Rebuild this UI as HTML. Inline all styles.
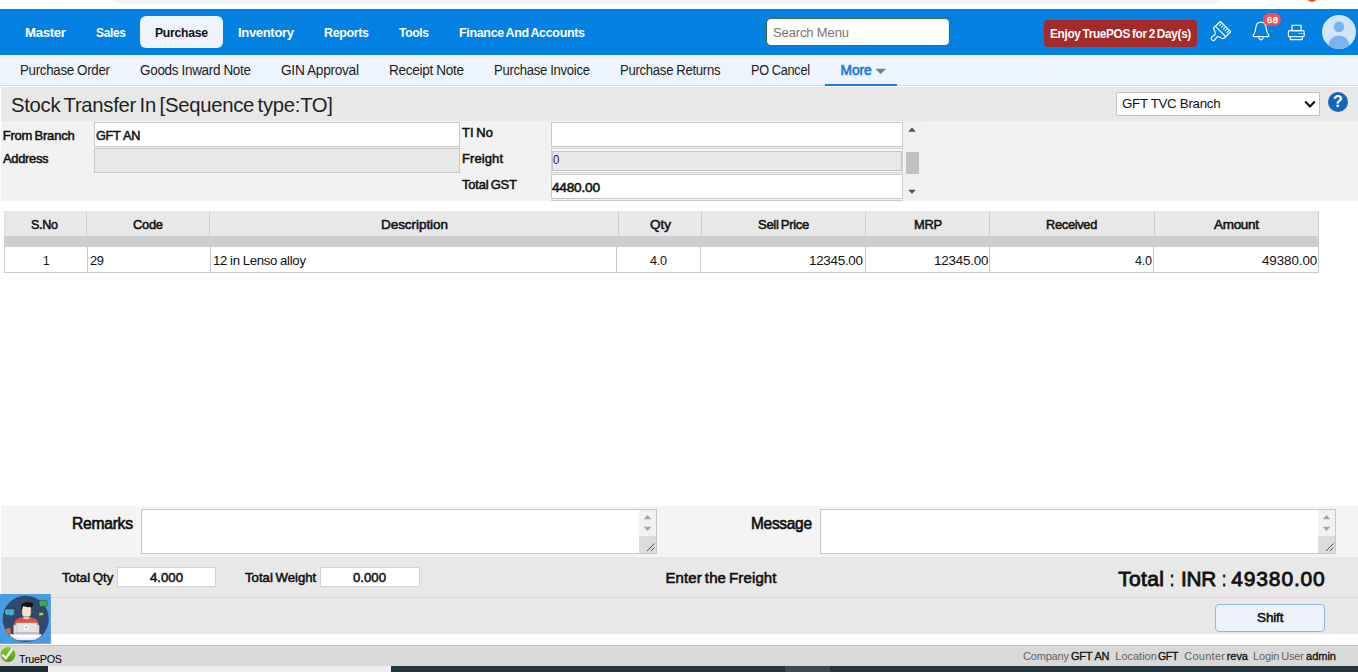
<!DOCTYPE html>
<html>
<head>
<meta charset="utf-8">
<title>Stock Transfer In</title>
<style>
html,body{margin:0;padding:0;}
body{width:1358px;height:672px;position:relative;overflow:hidden;background:#fff;font-family:"Liberation Sans",sans-serif;}
.a{position:absolute;box-sizing:border-box;}
.t{position:absolute;white-space:nowrap;font-family:"Liberation Sans",sans-serif;}
.inp{position:absolute;box-sizing:border-box;background:#fff;border:1px solid #c8c8c8;}
.dis{background:#e8e8e8;}
</style>
</head>
<body>
<!-- browser chrome sliver -->
<div class="a" style="left:108px;top:-10px;width:1118px;height:14px;background:#f1f3f4;border-radius:0 0 14px 14px;"></div>
<div class="a" style="left:1307px;top:-8px;width:10px;height:10px;border-radius:5px;background:#e8501a;"></div>

<!-- top blue bar -->
<div class="a" style="left:0;top:9px;width:1358px;height:46px;background:#0381e3;"></div>
<div class="a" style="left:140px;top:16px;width:83px;height:32px;background:#edf4fc;border-radius:6px;"></div>
<!-- search -->
<div class="a" style="left:766px;top:18px;width:184px;height:28px;background:#fff;border:1px solid #3c6e46;border-radius:5px;"></div>
<!-- trial button -->
<div class="a" style="left:1044px;top:20px;width:153px;height:27px;background:#a52a2a;border-radius:4px;"></div>

<!-- sub nav -->
<div class="a" style="left:0;top:55px;width:1358px;height:31px;background:#edf4fc;border-bottom:1px solid #c5dcf1;"></div>
<div class="a" style="left:825px;top:83.5px;width:72px;height:2px;background:#1c7ed6;"></div>

<!-- title bar -->
<div class="a" style="left:1px;top:87px;width:1357px;height:34px;background:#e8e8e8;"></div>
<!-- form area -->
<div class="a" style="left:1px;top:121px;width:1357px;height:80px;background:#f2f2f2;"></div>

<!-- branch select -->
<div class="a" style="left:1116px;top:92px;width:204px;height:23.5px;background:#fff;border:1px solid #c4c4c4;"></div>

<!-- form inputs -->
<div class="inp" style="left:94px;top:122px;width:365.5px;height:24.5px;"></div>
<div class="inp dis" style="left:94px;top:148px;width:365.5px;height:24.5px;"></div>
<div class="inp" style="left:551px;top:122px;width:352px;height:24.5px;"></div>
<div class="inp" style="left:551px;top:148px;width:352px;height:24.5px;background:#fafafa;border:1px solid #d2d2d2;"></div><div class="inp" style="left:552px;top:151px;width:350px;height:20px;background:#e8e8e8;border:1px solid #c4c4c4;"></div>
<div class="inp" style="left:551px;top:174px;width:352px;height:24.5px;"></div>
<div class="a" style="left:551px;top:200px;width:352px;height:1px;background:#c8c8c8;"></div>
<!-- form scrollbar -->
<div class="a" style="left:904px;top:121px;width:17px;height:80px;background:#f0f0f0;"></div>
<div class="a" style="left:906px;top:152px;width:13px;height:22px;background:#c1c1c1;"></div>

<!-- table -->
<div class="a" style="left:4px;top:211px;width:1315px;height:25px;background:#e8e8e8;"></div>
<div class="a" style="left:4px;top:236px;width:1315px;height:10.5px;background:#cecece;"></div>
<div class="a" style="left:4px;top:246.5px;width:1315px;height:26px;background:#fff;border:1px solid #c8c8c8;border-top:none;"></div>

<!-- remarks area -->
<div class="a" style="left:1px;top:506px;width:1357px;height:51px;background:#f4f4f4;"></div>
<div class="a" style="left:1px;top:557px;width:1357px;height:77px;background:#e8e8e8;"></div>
<div class="a" style="left:1px;top:597px;width:1357px;height:1px;background:#d6d6d6;"></div>
<div class="inp" style="left:141px;top:509px;width:516px;height:45px;"></div>
<div class="inp" style="left:820px;top:509px;width:516px;height:45px;"></div>
<div class="inp" style="left:117px;top:567px;width:99px;height:20px;border-color:#d4d4d4;"></div>
<div class="inp" style="left:320px;top:567px;width:100px;height:20px;border-color:#d4d4d4;"></div>
<!-- shift button -->
<div class="a" style="left:1215px;top:604px;width:110px;height:28px;background:#edf2fb;border:1px solid #8db6f0;border-radius:4px;"></div>

<!-- footer -->
<div class="a" style="left:0;top:645px;width:1358px;height:21px;background:#d9d9d9;border-top:1px solid #c6c6c6;"></div>
<div class="a" style="left:0;top:666px;width:1358px;height:6px;background:#eeeeee;"></div>
<div class="a" style="left:0;top:666px;width:48px;height:6px;background:#1e2f38;"></div>
<div class="a" style="left:391px;top:666px;width:967px;height:6px;background:#22333b;"></div>
<div class="a" style="left:785px;top:666px;width:45px;height:6px;background:#3a4a52;"></div>


<!-- table dividers -->
<div class="a" style="left:86px;top:211px;width:1px;height:25px;background:#cfcfcf;"></div>
<div class="a" style="left:209px;top:211px;width:1px;height:25px;background:#cfcfcf;"></div>
<div class="a" style="left:618px;top:211px;width:1px;height:25px;background:#cfcfcf;"></div>
<div class="a" style="left:701px;top:211px;width:1px;height:25px;background:#cfcfcf;"></div>
<div class="a" style="left:865px;top:211px;width:1px;height:25px;background:#cfcfcf;"></div>
<div class="a" style="left:989px;top:211px;width:1px;height:25px;background:#cfcfcf;"></div>
<div class="a" style="left:1154px;top:211px;width:1px;height:25px;background:#cfcfcf;"></div>
<div class="a" style="left:1318px;top:211px;width:1px;height:25px;background:#cfcfcf;"></div>
<div class="a" style="left:4px;top:211px;width:1px;height:25px;background:#dcdcdc;"></div>
<div class="a" style="left:87px;top:246.5px;width:1px;height:26px;background:#c8c8c8;"></div>
<div class="a" style="left:210px;top:246.5px;width:1px;height:26px;background:#c8c8c8;"></div>
<div class="a" style="left:616px;top:246.5px;width:1px;height:26px;background:#c8c8c8;"></div>
<div class="a" style="left:700px;top:246.5px;width:1px;height:26px;background:#c8c8c8;"></div>
<div class="a" style="left:865px;top:246.5px;width:1px;height:26px;background:#c8c8c8;"></div>
<div class="a" style="left:989px;top:246.5px;width:1px;height:26px;background:#c8c8c8;"></div>
<div class="a" style="left:1153px;top:246.5px;width:1px;height:26px;background:#c8c8c8;"></div>

<!-- form scrollbar arrows -->
<svg class="a" style="left:905.4px;top:123.3px" width="14" height="14" viewBox="0 0 14 14"><path d="M3.3 8.7 L7 4.4 L10.7 8.7 Z" fill="#505050"/></svg>
<svg class="a" style="left:905.4px;top:185px" width="14" height="14" viewBox="0 0 14 14"><path d="M3.3 4.7 L7 9 L10.7 4.7 Z" fill="#505050"/></svg>

<!-- More caret -->
<svg class="a" style="left:875px;top:68px" width="12" height="7" viewBox="0 0 12 7"><path d="M0.3 0.8 L11 0.8 L5.65 6.3 Z" fill="#7a7f85"/></svg>

<!-- select chevron -->
<svg class="a" style="left:1303px;top:98px" width="14" height="12" viewBox="0 0 14 12"><path d="M2.2 3.6 L7 8.4 L11.8 3.6" fill="none" stroke="#111" stroke-width="2.1"/></svg>

<!-- help icon -->
<div class="a" style="left:1328px;top:92px;width:20px;height:20px;border-radius:10px;background:#1565c0;"></div>
<span class="t" style="left:1333.1px;top:92.2px;line-height:20px;font-size:16px;font-weight:700;color:#fff;">?</span>

<!-- textarea scrollbars -->
<div class="a" style="left:639px;top:510px;width:17px;height:43px;background:#f1f1f1;"></div>
<div class="a" style="left:639px;top:536px;width:17px;height:17px;background:#dcdcdc;"></div>
<svg class="a" style="left:639px;top:510px" width="17" height="43" viewBox="0 0 17 43"><path d="M4.8 9.2 L8.5 4.9 L12.2 9.2 Z" fill="#a3a3a3"/><path d="M4.8 16.7 L8.5 21 L12.2 16.7 Z" fill="#a3a3a3"/><path d="M8 41 L15.5 33.5 M12 41 L15.5 37.5" stroke="#555" stroke-width="1" fill="none"/></svg>
<div class="a" style="left:1318px;top:510px;width:17px;height:43px;background:#f1f1f1;"></div>
<div class="a" style="left:1318px;top:536px;width:17px;height:17px;background:#dcdcdc;"></div>
<svg class="a" style="left:1318px;top:510px" width="17" height="43" viewBox="0 0 17 43"><path d="M4.8 9.2 L8.5 4.9 L12.2 9.2 Z" fill="#a3a3a3"/><path d="M4.8 16.7 L8.5 21 L12.2 16.7 Z" fill="#a3a3a3"/><path d="M8 41 L15.5 33.5 M12 41 L15.5 37.5" stroke="#555" stroke-width="1" fill="none"/></svg>

<!-- brush icon -->
<svg class="a" style="left:1204px;top:14px" width="40" height="34" viewBox="0 0 791 672" fill="none" stroke="#fff" stroke-width="24" stroke-linejoin="round" stroke-linecap="round">
<path d="M325 148 L528 350 L402 476 Q368 502 335 472 Q292 432 256 452 L216 510 Q182 542 151 506 Q130 470 166 446 L214 412 Q240 386 214 340 Q176 290 202 262 Z"/>
<path d="M232 250 L422 440"/>
<path d="M335 198 L306 228 M373 232 L344 262 M410 268 L381 298 M446 302 L417 332 M482 338 L453 368" stroke-width="20"/>
</svg>

<!-- bell + badge + printer -->
<svg class="a" style="left:1246px;top:10px" width="66" height="38" viewBox="0 0 1167 672" fill="none" stroke="#fff" stroke-width="21" stroke-linejoin="round" stroke-linecap="round">
<path d="M265 215 Q182 215 172 320 Q166 400 127 448 Q118 470 142 470 L388 470 Q412 470 402 448 Q365 400 357 320 Q348 215 265 215 Z"/>
<path d="M228 492 Q238 528 265 528 Q292 528 302 492"/>
<rect x="300" y="55" width="318" height="225" rx="112" fill="#f0524f" stroke="none"/>
<rect x="812" y="270" width="162" height="95"/>
<rect x="750" y="365" width="278" height="108" rx="22"/>
<rect x="782" y="473" width="212" height="50" fill="#0381e3"/>
<path d="M940 415 L952 415 M975 415 L990 415" stroke-width="16"/>
</svg>

<!-- user avatar -->
<svg class="a" style="left:1321px;top:14px" width="36" height="36" viewBox="0 0 36 36">
<defs><clipPath id="uc"><circle cx="18" cy="18" r="17"/></clipPath></defs>
<circle cx="18" cy="18" r="17" fill="#cfe6fc"/>
<g clip-path="url(#uc)" fill="#7cb5ee"><circle cx="18" cy="12.9" r="5.3"/><ellipse cx="18" cy="31.6" rx="10.5" ry="10.2"/></g>
</svg>

<!-- assistant avatar -->
<svg class="a" style="left:0;top:592px" width="54" height="54" viewBox="0 0 672 672">
<defs><clipPath id="ac"><circle cx="320" cy="335" r="285"/></clipPath></defs>
<rect x="0" y="25" width="633" height="620" fill="#4a9be2"/>
<circle cx="320" cy="335" r="287" fill="#2f4a70"/>
<g clip-path="url(#ac)">
<rect x="75" y="452" width="58" height="80" fill="#e8683c" transform="rotate(-8 100 490)"/>
<path d="M165 420 Q170 325 262 312 L395 312 Q482 325 492 420 L492 540 L165 540 Z" fill="#df5049" stroke="#1d2f45" stroke-width="6"/>
<rect x="292" y="285" width="72" height="50" fill="#f3dfc3"/>
<path d="M290 312 Q328 370 368 312 Z" fill="#f3dfc3"/>
<rect x="272" y="165" width="116" height="145" rx="40" fill="#f7e6cc" stroke="#1d2f45" stroke-width="6"/>
<path d="M262 215 Q250 135 330 125 Q380 118 412 140 Q415 175 390 205 L385 185 Q330 195 288 175 Q275 195 275 225 Z" fill="#141414"/>
<rect x="165" y="405" width="42" height="120" rx="18" fill="#f3dfc3" stroke="#1d2f45" stroke-width="5"/>
<rect x="450" y="405" width="42" height="120" rx="18" fill="#f3dfc3" stroke="#1d2f45" stroke-width="5"/>
<rect x="200" y="385" width="262" height="130" rx="10" fill="#dfe5e9" stroke="#b7c0c7" stroke-width="5"/>
<rect x="190" y="500" width="282" height="26" fill="#b5bdc4"/>
<circle cx="325" cy="440" r="30" fill="#f4f8fb"/>
<circle cx="325" cy="440" r="12" fill="#6fa8e8"/>
<rect x="125" y="526" width="390" height="46" fill="#ffffff"/>
<rect x="165" y="572" width="310" height="30" fill="#e6ecf0"/>
</g>
<path d="M60 228 Q60 212 76 212 L162 212 Q178 212 178 228 L178 272 Q178 288 162 288 L150 288 L150 316 L124 288 L76 288 Q60 288 60 272 Z" fill="#41b4c9" stroke="#1d2f45" stroke-width="6"/>
<path d="M486 120 Q486 104 502 104 L570 104 Q586 104 586 120 L586 160 Q586 176 570 176 L525 176 L503 198 L506 176 Q486 176 486 160 Z" fill="#3fae49" stroke="#1d2f45" stroke-width="6"/>
<path d="M484 258 L540 252 L542 290 L500 294 L490 308 L488 294 Z" fill="#e8b923" stroke="#1d2f45" stroke-width="5"/>
</svg>

<!-- green check -->
<svg class="a" style="left:0;top:646px" width="17" height="17" viewBox="0 0 17 17">
<defs><linearGradient id="gg" x1="0" y1="0" x2="0" y2="1"><stop offset="0" stop-color="#86cc3a"/><stop offset="1" stop-color="#4c9c10"/></linearGradient></defs>
<circle cx="8" cy="8.5" r="7.4" fill="url(#gg)"/>
<path d="M2.2 8.6 L5.8 12.2 L12.6 2.6" fill="none" stroke="#fff" stroke-width="2.4"/>
</svg>

<span class="t" style="left:25.0px;top:24.0px;line-height:18px;font-size:13.6px;font-weight:700;color:#fff;word-spacing:-1.16px;letter-spacing:-0.350px;transform:scaleX(0.9744);transform-origin:0 50%;">Master</span>
<span class="t" style="left:96.0px;top:24.0px;line-height:18px;font-size:13.6px;font-weight:700;color:#fff;word-spacing:-1.16px;letter-spacing:-0.350px;transform:scaleX(0.8790);transform-origin:0 50%;">Sales</span>
<span class="t" style="left:238.0px;top:24.0px;line-height:18px;font-size:13.6px;font-weight:700;color:#fff;word-spacing:-1.16px;letter-spacing:-0.350px;transform:scaleX(0.9591);transform-origin:0 50%;">Inventory</span>
<span class="t" style="left:324.0px;top:24.0px;line-height:18px;font-size:13.6px;font-weight:700;color:#fff;word-spacing:-1.16px;letter-spacing:-0.350px;transform:scaleX(0.9132);transform-origin:0 50%;">Reports</span>
<span class="t" style="left:399.0px;top:24.0px;line-height:18px;font-size:13.6px;font-weight:700;color:#fff;word-spacing:-1.16px;letter-spacing:-0.350px;transform:scaleX(0.8863);transform-origin:0 50%;">Tools</span>
<span class="t" style="left:459.0px;top:24.0px;line-height:18px;font-size:13.6px;font-weight:700;color:#fff;word-spacing:-1.16px;letter-spacing:-0.350px;transform:scaleX(0.9177);transform-origin:0 50%;">Finance And Accounts</span>
<span class="t" style="left:155.0px;top:24.0px;line-height:18px;font-size:13.6px;font-weight:700;color:#111;word-spacing:-1.16px;letter-spacing:-0.350px;transform:scaleX(0.9018);transform-origin:0 50%;">Purchase</span>
<span class="t" style="left:1050.0px;top:25.1px;line-height:17px;font-size:12.8px;font-weight:700;color:#fff;word-spacing:-1.09px;letter-spacing:-0.350px;transform:scaleX(0.9217);transform-origin:0 50%;">Enjoy TruePOS for 2 Day(s)</span>
<span class="t" style="left:1267.0px;top:13.6px;line-height:12px;font-size:9.4px;font-weight:400;-webkit-text-stroke:0.38px #fff;color:#fff;word-spacing:-0.80px;letter-spacing:0.562px;">68</span>
<span class="t" style="left:20.0px;top:61.8px;line-height:18px;font-size:13.8px;font-weight:400;color:#1c1c1c;word-spacing:-0.28px;letter-spacing:-0.300px;transform:scaleX(0.9656);transform-origin:0 50%;">Purchase Order</span>
<span class="t" style="left:140.0px;top:61.8px;line-height:18px;font-size:13.8px;font-weight:400;color:#1c1c1c;word-spacing:-0.28px;letter-spacing:-0.300px;transform:scaleX(0.9779);transform-origin:0 50%;">Goods Inward Note</span>
<span class="t" style="left:281.0px;top:61.8px;line-height:18px;font-size:13.8px;font-weight:400;color:#1c1c1c;word-spacing:-0.28px;letter-spacing:-0.300px;transform:scaleX(0.9939);transform-origin:0 50%;">GIN Approval</span>
<span class="t" style="left:389.0px;top:61.8px;line-height:18px;font-size:13.8px;font-weight:400;color:#1c1c1c;word-spacing:-0.28px;letter-spacing:-0.300px;transform:scaleX(0.9845);transform-origin:0 50%;">Receipt Note</span>
<span class="t" style="left:494.0px;top:61.8px;line-height:18px;font-size:13.8px;font-weight:400;color:#1c1c1c;word-spacing:-0.28px;letter-spacing:-0.300px;transform:scaleX(0.9499);transform-origin:0 50%;">Purchase Invoice</span>
<span class="t" style="left:620.0px;top:61.8px;line-height:18px;font-size:13.8px;font-weight:400;color:#1c1c1c;word-spacing:-0.28px;letter-spacing:-0.300px;transform:scaleX(0.9512);transform-origin:0 50%;">Purchase Returns</span>
<span class="t" style="left:751.0px;top:61.8px;line-height:18px;font-size:13.8px;font-weight:400;color:#1c1c1c;word-spacing:-0.28px;letter-spacing:-0.300px;transform:scaleX(0.9213);transform-origin:0 50%;">PO Cancel</span>
<span class="t" style="left:840.5px;top:61.8px;line-height:18px;font-size:13.8px;font-weight:400;-webkit-text-stroke:0.55px #1a73d9;color:#1a73d9;word-spacing:-1.17px;letter-spacing:-0.046px;">More</span>
<span class="t" style="left:11.0px;top:92.4px;line-height:26px;font-size:20.3px;font-weight:400;color:#222;word-spacing:-1.73px;letter-spacing:-0.287px;">Stock Transfer In [Sequence type:TO]</span>
<span class="t" style="left:2.7px;top:126.9px;line-height:17px;font-size:13px;font-weight:400;-webkit-text-stroke:0.52px #111;color:#111;word-spacing:-1.10px;letter-spacing:-0.203px;">From Branch</span>
<span class="t" style="left:2.7px;top:150.0px;line-height:17px;font-size:13px;font-weight:400;-webkit-text-stroke:0.52px #111;color:#111;word-spacing:-1.10px;letter-spacing:-0.300px;transform:scaleX(0.9912);transform-origin:0 50%;">Address</span>
<span class="t" style="left:95.8px;top:126.9px;line-height:17px;font-size:13px;font-weight:400;-webkit-text-stroke:0.52px #111;color:#111;word-spacing:0.26px;letter-spacing:-0.300px;transform:scaleX(0.9784);transform-origin:0 50%;">GFT AN</span>
<span class="t" style="left:462.0px;top:123.9px;line-height:17px;font-size:13px;font-weight:400;-webkit-text-stroke:0.52px #111;color:#111;word-spacing:-1.10px;letter-spacing:0.078px;">TI No</span>
<span class="t" style="left:462.0px;top:150.0px;line-height:17px;font-size:13px;font-weight:400;-webkit-text-stroke:0.52px #111;color:#111;word-spacing:-1.10px;letter-spacing:0.089px;">Freight</span>
<span class="t" style="left:462.0px;top:175.8px;line-height:17px;font-size:13px;font-weight:400;-webkit-text-stroke:0.52px #111;color:#111;word-spacing:-1.10px;letter-spacing:-0.213px;">Total GST</span>
<span class="t" style="left:553.2px;top:152.3px;line-height:16px;font-size:12.5px;font-weight:400;color:#1a1a3a;word-spacing:-1.06px;letter-spacing:-0.300px;transform:scaleX(0.9204);transform-origin:0 50%;">0</span>
<span class="t" style="left:552.0px;top:179.0px;line-height:18px;font-size:13.7px;font-weight:400;-webkit-text-stroke:0.55px #111;color:#111;word-spacing:-1.16px;letter-spacing:-0.247px;">4480.00</span>
<span class="t" style="left:1122.0px;top:94.9px;line-height:17px;font-size:13.33px;font-weight:400;color:#111;word-spacing:0.00px;letter-spacing:-0.300px;">GFT TVC Branch</span>
<span class="t" style="left:31.0px;top:215.9px;line-height:18px;font-size:13.5px;font-weight:400;-webkit-text-stroke:0.54px #111;color:#111;word-spacing:-1.15px;letter-spacing:-0.300px;transform:scaleX(0.9273);transform-origin:0 50%;">S.No</span>
<span class="t" style="left:133.0px;top:215.9px;line-height:18px;font-size:13.5px;font-weight:400;-webkit-text-stroke:0.54px #111;color:#111;word-spacing:-1.15px;letter-spacing:-0.300px;transform:scaleX(0.9560);transform-origin:0 50%;">Code</span>
<span class="t" style="left:381.0px;top:215.9px;line-height:18px;font-size:13.5px;font-weight:400;-webkit-text-stroke:0.54px #111;color:#111;word-spacing:-1.15px;letter-spacing:-0.053px;">Description</span>
<span class="t" style="left:650.0px;top:215.9px;line-height:18px;font-size:13.5px;font-weight:400;-webkit-text-stroke:0.54px #111;color:#111;word-spacing:-1.15px;letter-spacing:-0.008px;">Qty</span>
<span class="t" style="left:758.0px;top:215.9px;line-height:18px;font-size:13.5px;font-weight:400;-webkit-text-stroke:0.54px #111;color:#111;word-spacing:-1.15px;letter-spacing:-0.300px;transform:scaleX(0.9647);transform-origin:0 50%;">Sell Price</span>
<span class="t" style="left:914.0px;top:215.9px;line-height:18px;font-size:13.5px;font-weight:400;-webkit-text-stroke:0.54px #111;color:#111;word-spacing:-1.15px;letter-spacing:-0.300px;transform:scaleX(0.9524);transform-origin:0 50%;">MRP</span>
<span class="t" style="left:1046.0px;top:215.9px;line-height:18px;font-size:13.5px;font-weight:400;-webkit-text-stroke:0.54px #111;color:#111;word-spacing:-1.15px;letter-spacing:-0.300px;transform:scaleX(0.9468);transform-origin:0 50%;">Received</span>
<span class="t" style="left:1214.0px;top:215.9px;line-height:18px;font-size:13.5px;font-weight:400;-webkit-text-stroke:0.54px #111;color:#111;word-spacing:-1.15px;letter-spacing:-0.300px;">Amount</span>
<span class="t" style="left:43.4px;top:252.0px;line-height:17px;font-size:13.4px;font-weight:400;color:#111;word-spacing:-0.40px;letter-spacing:-0.300px;transform:scaleX(0.8855);transform-origin:0 50%;">1</span>
<span class="t" style="left:90.0px;top:252.0px;line-height:17px;font-size:13.4px;font-weight:400;color:#111;word-spacing:-0.40px;letter-spacing:-0.300px;transform:scaleX(0.9585);transform-origin:0 50%;">29</span>
<span class="t" style="left:213.0px;top:252.0px;line-height:17px;font-size:13.4px;font-weight:400;color:#111;word-spacing:-0.40px;letter-spacing:-0.300px;transform:scaleX(0.9840);transform-origin:0 50%;">12 in Lenso alloy</span>
<span class="t" style="left:650.0px;top:252.0px;line-height:17px;font-size:13.4px;font-weight:400;color:#111;word-spacing:-0.40px;letter-spacing:-0.300px;transform:scaleX(0.9431);transform-origin:0 50%;">4.0</span>
<span class="t" style="left:809.0px;top:252.0px;line-height:17px;font-size:13.4px;font-weight:400;color:#111;word-spacing:-0.40px;letter-spacing:-0.266px;">12345.00</span>
<span class="t" style="left:934.0px;top:252.0px;line-height:17px;font-size:13.4px;font-weight:400;color:#111;word-spacing:-0.40px;letter-spacing:-0.208px;">12345.00</span>
<span class="t" style="left:1135.0px;top:252.0px;line-height:17px;font-size:13.4px;font-weight:400;color:#111;word-spacing:-0.40px;letter-spacing:-0.300px;transform:scaleX(0.9431);transform-origin:0 50%;">4.0</span>
<span class="t" style="left:1262.0px;top:252.0px;line-height:17px;font-size:13.4px;font-weight:400;color:#111;word-spacing:-0.40px;letter-spacing:-0.094px;">49380.00</span>
<span class="t" style="left:72.0px;top:512.5px;line-height:21px;font-size:16.5px;font-weight:400;-webkit-text-stroke:0.66px #111;color:#111;word-spacing:-1.40px;letter-spacing:-0.300px;transform:scaleX(0.9499);transform-origin:0 50%;">Remarks</span>
<span class="t" style="left:751.0px;top:512.5px;line-height:21px;font-size:16.5px;font-weight:400;-webkit-text-stroke:0.66px #111;color:#111;word-spacing:-1.40px;letter-spacing:-0.300px;transform:scaleX(0.9363);transform-origin:0 50%;">Message</span>
<span class="t" style="left:62.0px;top:569.1px;line-height:17px;font-size:13.2px;font-weight:400;-webkit-text-stroke:0.53px #111;color:#111;word-spacing:-1.12px;letter-spacing:0.060px;">Total Qty</span>
<span class="t" style="left:150.0px;top:569.1px;line-height:17px;font-size:13.2px;font-weight:400;-webkit-text-stroke:0.53px #111;color:#111;word-spacing:-1.12px;letter-spacing:-0.004px;">4.000</span>
<span class="t" style="left:245.0px;top:569.1px;line-height:17px;font-size:13.2px;font-weight:400;-webkit-text-stroke:0.53px #111;color:#111;word-spacing:-1.12px;letter-spacing:0.007px;">Total Weight</span>
<span class="t" style="left:353.0px;top:569.1px;line-height:17px;font-size:13.2px;font-weight:400;-webkit-text-stroke:0.53px #111;color:#111;word-spacing:-1.12px;letter-spacing:-0.004px;">0.000</span>
<span class="t" style="left:665.4px;top:567.6px;line-height:20px;font-size:15px;font-weight:400;-webkit-text-stroke:0.60px #111;color:#111;word-spacing:-1.28px;letter-spacing:0.121px;">Enter the Freight</span>
<span class="t" style="left:1118.2px;top:564.6px;line-height:27px;font-size:21px;font-weight:400;-webkit-text-stroke:0.84px #111;color:#111;word-spacing:-1.79px;letter-spacing:0.335px;">Total</span>
<span class="t" style="left:1170.3px;top:564.6px;line-height:27px;font-size:21px;font-weight:400;-webkit-text-stroke:0.84px #111;color:#111;word-spacing:-1.79px;letter-spacing:-0.300px;transform:scaleX(0.7016);transform-origin:0 50%;">:</span>
<span class="t" style="left:1181.2px;top:564.6px;line-height:27px;font-size:21px;font-weight:400;-webkit-text-stroke:0.84px #111;color:#111;word-spacing:-1.79px;letter-spacing:-0.300px;transform:scaleX(0.9895);transform-origin:0 50%;">INR</span>
<span class="t" style="left:1221.8px;top:564.6px;line-height:27px;font-size:21px;font-weight:400;-webkit-text-stroke:0.84px #111;color:#111;word-spacing:-1.79px;letter-spacing:-0.300px;transform:scaleX(0.7187);transform-origin:0 50%;">:</span>
<span class="t" style="left:1231.3px;top:564.6px;line-height:27px;font-size:21px;font-weight:400;-webkit-text-stroke:0.84px #111;color:#111;word-spacing:-1.79px;letter-spacing:0.844px;">49380.00</span>
<span class="t" style="left:1257.0px;top:609.3px;line-height:18px;font-size:13.5px;font-weight:400;-webkit-text-stroke:0.54px #111;color:#111;word-spacing:-1.15px;letter-spacing:-0.129px;">Shift</span>
<span class="t" style="left:1023.0px;top:648.6px;line-height:14px;font-size:11px;font-weight:400;color:#636363;word-spacing:-0.94px;letter-spacing:-0.180px;">Company</span>
<span class="t" style="left:1071.0px;top:648.6px;line-height:14px;font-size:11px;font-weight:400;-webkit-text-stroke:0.33px #111;color:#111;word-spacing:0.33px;letter-spacing:-0.292px;">GFT AN</span>
<span class="t" style="left:1115.3px;top:648.6px;line-height:14px;font-size:11px;font-weight:400;color:#636363;word-spacing:-0.94px;letter-spacing:-0.013px;">Location</span>
<span class="t" style="left:1158.3px;top:648.6px;line-height:14px;font-size:11px;font-weight:400;-webkit-text-stroke:0.33px #111;color:#111;word-spacing:-0.94px;letter-spacing:-0.300px;transform:scaleX(0.9533);transform-origin:0 50%;">GFT</span>
<span class="t" style="left:1184.2px;top:648.6px;line-height:14px;font-size:11px;font-weight:400;color:#636363;word-spacing:-0.94px;letter-spacing:0.277px;">Counter</span>
<span class="t" style="left:1226.7px;top:648.6px;line-height:14px;font-size:11px;font-weight:400;-webkit-text-stroke:0.33px #111;color:#111;word-spacing:-0.94px;letter-spacing:-0.035px;">reva</span>
<span class="t" style="left:1253.0px;top:648.6px;line-height:14px;font-size:11px;font-weight:400;color:#636363;word-spacing:-0.94px;letter-spacing:-0.141px;">Login User</span>
<span class="t" style="left:1306.0px;top:648.6px;line-height:14px;font-size:11px;font-weight:400;-webkit-text-stroke:0.33px #111;color:#111;word-spacing:-0.94px;letter-spacing:0.008px;">admin</span>
<span class="t" style="left:19.0px;top:651.5px;line-height:15px;font-size:11.3px;font-weight:400;color:#000;word-spacing:0.00px;letter-spacing:-0.300px;transform:scaleX(0.9583);transform-origin:0 50%;">TruePOS</span>
<span class="t" style="left:773.0px;top:23.7px;line-height:17px;font-size:13px;font-weight:400;color:#757575;word-spacing:0.00px;letter-spacing:-0.133px;">Search Menu</span>
</body>
</html>
